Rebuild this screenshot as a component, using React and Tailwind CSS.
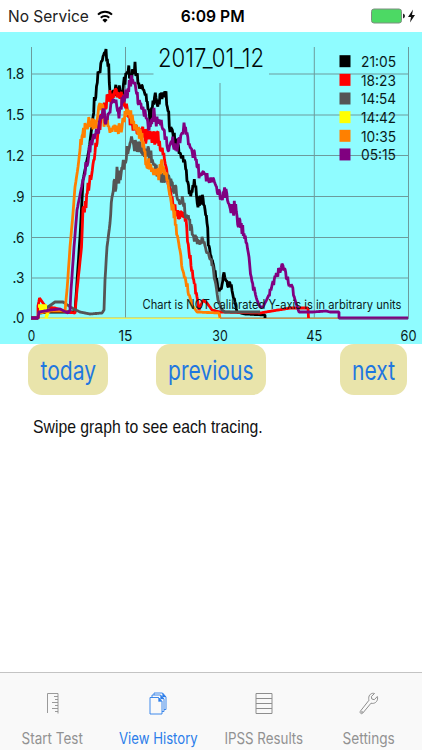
import React from "react";

const tracings = [
  {
    time: "21:05",
    color: "#000000",
    from: 93,
    points:
      "31,318 38,318 39,313 50,312 75,312 76,297 80,237 83,180 89,150 93,117 95,97 98,77 100,67 103,52 106,52 108,60 110,90 112,98 115,89 118,89 122,95 125,80 128,67 131,77 135,67 138,83 143,85 146,100 150,120 153,107 156,97 157,105 160,96 166,98 168,110 170,130 173,137 177,143 182,153 185,163 187,177 190,191 195,184 198,202 203,197 207,223 209,247 213,263 218,287 220,290 224,275 227,282 232,287 235,302 237,312 245,314 265,315 265,318",
  },
  {
    time: "18:23",
    color: "#ff0000",
    from: 84,
    points:
      "31,318 38,318 38,306 39.5,298 43,303 46,307 55,308 67,312 75,313 77,290 81.5,247 83,208 86,203 88,188 93,163 97,140 100,123 103,110 107,100 110,95 114,100 117,91 120,97 125,103 128,115 133,126 137,128 142,130 145,138 150,133 152,138 158,138 161,147 163,157 166,168 170,190 175,211 177,215 183,217 186,223 189,250 193,277 197,297 199,310 203,300 207,303 212,310 220,312 260,313 278,310 291,308 308,308 308.5,318",
  },
  {
    time: "14:54",
    color: "#555555",
    from: 111,
    points:
      "31,318 38,318 39,312 48,307 55,302 63,302 72,308 80,312 90,314 102,313 104,310 105,280 107,247 110,223 112,197 114,187 116,184 117,172 118,183 121,170 124,165 127,153 130,144 133,143 136,146 140,145 143,150 148,153 153,160 157,173 162,177 167,175 170,183 173,187 178,197 183,203 185,213 189,220 193,233 198,243 202,240 207,250 212,262 215,280 218,300 222,310 225,312 260,312",
  },
  { time: "14:42", color: "#ffff00", from: 999, points: "38,306 47,306 M39,309 L47,309 M46,318 L48,312" },
  {
    time: "10:35",
    color: "#ff8000",
    from: 80,
    points:
      "38,318 39,313 52,311 65,311 67,290 70,247 73,213 75,187 78,167 80,150 82,137 85,129 88,122 91,121 93,127 97,120 98,110 102,106 104,120 108,123 112,130 117,132 122,128 125,117 128,108 130,115 133,123 138,130 142,140 145,157 150,167 153,173 158,175 162,166 165,170 167,183 170,197 174,213 178,240 183,270 188,290 192,305 197,312 219,313 220,318",
  },
  {
    time: "05:15",
    color: "#800080",
    from: 83,
    points:
      "31,318 38,318 39,312 50,310 60,309 68,313 70,310 71,290 74,247 77,210 81,190 85,170 88,157 92,143 95,132 98,130 102,117 103,107 105,119 108,119 110,107 113,95 116,105 119,119 122,103 125,95 128,90 132,77 134,79 138,98 143,108 147,121 149,126 153,117 154,109 157,123 162,123 165,133 167,147 168,152 172,142 177,147 180,141 183,137 184,127 187,137 190,143 193,152 197,163 199,173 202,177 207,176 210,181 215,184 218,188 221,195 226,193 229,207 233,213 235,205 237,217 242,228 246,240 249,260 252,283 257,300 260,307 263,307 268,297 273,284 277,274 280,269 282,263 283,268 287,278 292,288 295,300 299,312 313,312 326,311 330,312 339,312 339,318 408,318",
  },
];

const random = (n) => {
  const v = Math.sin(n * 127.1) * 43758.5453;
  return v - Math.floor(v) - 0.5;
};

// adds the small sensor noise to the part of a tracing above the base line
const toPath = ({ points, from }) => {
  if (points.includes("M")) return `M${points}`;
  const pts = points.split(" ").map((p) => p.split(",").map(Number));
  let d = `M${pts[0][0]},${pts[0][1]}`;
  for (let i = 1; i < pts.length; i++) {
    const [x0, y0] = pts[i - 1];
    const [x1, y1] = pts[i];
    const steps = Math.max(1, Math.round((x1 - x0) / 0.7));
    for (let s = 1; s <= steps; s++) {
      const x = x0 + ((x1 - x0) * s) / steps;
      const y = y0 + ((y1 - y0) * s) / steps;
      const noisy = x > from && y < 295;
      const n = noisy ? random(x + from) * (y > 240 ? 8 : 14) : 0;
      d += `L${x.toFixed(1)},${Math.max(49, y + n).toFixed(1)}`;
    }
  }
  return d;
};

const rows = [
  ["1.8", 74],
  ["1.5", 115],
  ["1.2", 155.5],
  [".9", 196.5],
  [".6", 237.5],
  [".3", 278],
  [".0", 318],
];

const columns = [
  ["0", 31.5, 7.5],
  ["15", 125.5, 14],
  ["30", 220, 15.5],
  ["45", 314.3, 16],
  ["60", 408.5, 16],
];

const Chart = () => (
  <svg
    viewBox="0 32 422 312"
    className="block h-[312px] w-[422px] shrink-0 bg-[#8ffcff] font-[Inter,sans-serif]"
  >
    <g stroke="#6c9b9d" strokeWidth="1">
      {rows.map(([label, y]) => (
        <line key={label} x1="31" x2="408.5" y1={y} y2={y} />
      ))}
      {columns.map(([label, x]) => (
        <line key={label} x1={x} x2={x} y1="47" y2="318" />
      ))}
    </g>
    <g fill="#0a1a1a" fontSize="15">
      {rows.map(([label, y]) => (
        <text
          key={label}
          x="24.5"
          y={y + 5}
          textAnchor="end"
          textLength={label.length === 3 ? 18 : 12}
          lengthAdjust="spacingAndGlyphs"
        >
          {label}
        </text>
      ))}
      {columns.map(([label, x, w]) => (
        <text key={label} x={x} y="341" textAnchor="middle" textLength={w} lengthAdjust="spacingAndGlyphs">
          {label}
        </text>
      ))}
    </g>

    <g fill="none" strokeWidth="1.5">
      <path d="M38,318.2H220" stroke="#eaf060" />
      <path d="M220,318.2H339" stroke="#c09a55" />
    </g>
    <g fill="none" strokeLinejoin="bevel">
      {tracings.map((t) => (
        <path key={t.time} d={toPath(t)} stroke={t.color} strokeWidth={t.time === "14:42" ? 3.5 : 2.8} />
      ))}
    </g>
    <path d="M339,318.6H408.5" stroke="#6d2a78" strokeWidth="1" />

    <rect x="153.5" y="40" width="115.5" height="43" fill="#8ffcff" />
    <text
      x="158"
      y="66.5"
      fontSize="26"
      fontWeight="350"
      textLength="106"
      lengthAdjust="spacingAndGlyphs"
      fill="#000808"
    >
      2017_01_12
    </text>

    {tracings.map((t, i) => (
      <g key={t.time}>
        <rect x="339.5" y={55.2 + i * 18.65} width="11" height="12" fill={t.color} />
        <text
          x="361"
          y={67 + i * 18.65}
          fontSize="14.5"
          textLength="35"
          lengthAdjust="spacingAndGlyphs"
          fill="#0a1a1a"
        >
          {t.time}
        </text>
      </g>
    ))}
    <text x="142.5" y="308.5" fontSize="12.5" textLength="259" lengthAdjust="spacingAndGlyphs" fill="#0a1a1a">
      Chart is NOT calibrated Y-axis is in arbitrary units
    </text>
  </svg>
);

const StatusBar = () => (
  <header className="grid h-8 shrink-0 grid-cols-3 items-center font-[Inter,sans-serif] text-black">
    <div className="flex items-center pl-2">
      <span className="w-[81px] whitespace-nowrap">
        <span className="inline-block origin-left scale-x-[0.94] text-[16.5px] leading-8 text-[#222]">No Service</span>
      </span>
      <svg viewBox="0 0 16 13" className="ml-2 h-[13px] w-4">
        <g fill="none" stroke="#000" strokeWidth="2">
          <path d="M1 4.6a10 10 0 0 1 14 0" />
          <path d="M3.8 7.7a6 6 0 0 1 8.4 0" />
        </g>
        <path d="M5.4 10a3.7 3.7 0 0 1 5.2 0L8 12.8z" />
      </svg>
    </div>
    <div className="pl-1 text-center">
      <span className="inline-block scale-x-[0.95] text-[16.5px] leading-8 font-semibold whitespace-nowrap">
        6:09 PM
      </span>
    </div>
    <div className="flex items-center justify-end pr-1.5">
      <svg viewBox="0 0 46 16" className="h-4 w-[46px]">
        <rect x="1.5" y="1" width="30" height="14" rx="2.5" fill="#4cd964" stroke="#7d8f80" />
        <path d="M33 5.5q2 .6 2 2.5t-2 2.5z" fill="#222" />
        <path d="M43 1.5L38 9h3l-1 5.5 5-7.5h-3z" fill="#111" />
      </svg>
    </div>
  </header>
);

const NavButton = ({ className, children }) => (
  <button
    className={`flex h-[51px] items-center justify-center rounded-[14px] bg-[#e9e4ab] font-[Inter,sans-serif] text-[26px] leading-none text-[#1f77e0] ${className}`}
  >
    <span className="mt-0.5 inline-block scale-x-[0.81]">{children}</span>
  </button>
);

const RulerIcon = () => (
  <svg viewBox="0 0 14 22" className="h-[22px] w-3.5" fill="none" stroke="#8e8e8e" strokeWidth="0.9">
    <path d="M1.5 21V1.5H12V21.5" />
    <path d="M8 4.5h4M9 7.5h3M6 10.5h6M9 13.5h3M6 16.5h6M9 19.5h3" />
  </svg>
);

const PagesIcon = () => (
  <svg viewBox="0 0 18 23" className="h-[23px] w-[18px]" fill="none" stroke="#2b7de9" strokeWidth="0.9">
    <path d="M1 5.5h8.5l3.5 4V22H1z" />
    <path d="M3 5.5V3h8.5l3.5 4v12.5h-2M5 3V1h8.5l3.5 4v12.5h-2" />
    <path d="M9.5 5.5v4h3.5zM11.5 3v4h3.5zM13.5 1v4h3.5z" fill="#2b7de9" strokeWidth="0.3" />
  </svg>
);

const ListIcon = () => (
  <svg viewBox="0 0 18 21" className="h-[21px] w-[18px]" fill="none" stroke="#8e8e8e" strokeWidth="1">
    <path d="M1 .5h16v20H1zM1 5.5h16M1 10.5h16M1 15.5h16" />
  </svg>
);

const WrenchIcon = () => (
  <svg viewBox="0 0 20 23" className="h-[23px] w-5" fill="none" stroke="#8e8e8e" strokeWidth="1">
    <path d="M15.5 1.5c-3-1-6 1.5-5.8 5 0 .8.1 1.2.3 1.7L1.5 19c-1.2 1.6.6 3.6 2.2 2.2L12 11.2c3.5 1 6.8-1.5 6.6-5.4l-.3-1.3-3 3.2-2.5-.7-.4-2.5z" />
    <circle cx="3" cy="20" r=".5" />
  </svg>
);

const tabs = [
  { label: "Start Test", icon: RulerIcon, width: "w-[105px]", scale: "scale-x-[0.87]" },
  { label: "View History", icon: PagesIcon, width: "w-[106px]", scale: "scale-x-[0.85]", active: true },
  { label: "IPSS Results", icon: ListIcon, width: "w-[105px]", scale: "scale-x-[0.86]" },
  { label: "Settings", icon: WrenchIcon, width: "w-[106px]", scale: "scale-x-[0.88]" },
];

const App = () => {
  return (
    <div className="flex h-[750px] w-[422px] flex-col overflow-hidden bg-white">
      <StatusBar />
      <Chart />
      <div className="flex shrink-0 pl-7">
        <NavButton className="w-20">today</NavButton>
        <NavButton className="ml-12 w-[110px]">previous</NavButton>
        <NavButton className="ml-[74px] w-[67px]">next</NavButton>
      </div>
      <p className="mt-5 pl-[33px] font-['Liberation_Sans',sans-serif] text-[19px] leading-6 whitespace-nowrap text-[#111]">
        <span className="inline-block origin-left scale-x-[0.83]">Swipe graph to see each tracing.</span>
      </p>

      <nav className="mt-auto flex h-[78px] shrink-0 border-t border-[#c4c4c4] bg-[#f9f9f9] font-[Inter,sans-serif]">
        {tabs.map(({ label, icon: Icon, width, scale, active }) => (
          <div
            key={label}
            className={`flex flex-col items-center ${width} ${active ? "text-[#2b7de9]" : "text-[#929292]"}`}
          >
            <div className="mt-4 flex h-7 items-center">
              <Icon />
            </div>
            <span className={`mt-3 text-[15.5px] leading-5 whitespace-nowrap ${scale}`}>{label}</span>
          </div>
        ))}
      </nav>
    </div>
  );
};

export default App;
